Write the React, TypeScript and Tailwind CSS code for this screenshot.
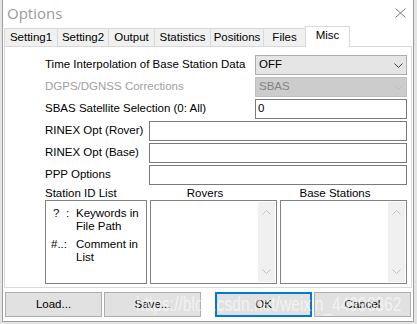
const tabs = [
  { name: 'Setting1', w: 'w-[53px]' },
  { name: 'Setting2', w: 'w-[51px]' },
  { name: 'Output', w: 'w-[46px]' },
  { name: 'Statistics', w: 'w-[56px]' },
  { name: 'Positions', w: 'w-[53px]' },
  { name: 'Files', w: 'w-[42px]' },
]

function Chevron({ up, className }: { up?: boolean; className?: string }) {
  return (
    <svg width="9" height="5" viewBox="0 0 9 5" className={className}>
      <polyline
        points={up ? '0.5,4.5 4.5,0.5 8.5,4.5' : '0.5,0.5 4.5,4.5 8.5,0.5'}
        fill="none"
        stroke="currentColor"
        strokeWidth="1"
      />
    </svg>
  )
}

function ListBox({ title }: { title: string }) {
  return (
    <div className="w-[127px] flex flex-col">
      <div className="h-[15px] flex items-end justify-center pr-[17px] leading-[14px]">{title}</div>
      <div className="h-[84px] border border-[#828282] bg-white flex justify-end p-[1px]">
        <div className="w-[17px] h-full bg-[#f0f0f0] flex flex-col items-center justify-between py-[8px] text-[#c2c2c2]">
          <Chevron up />
          <Chevron />
        </div>
      </div>
    </div>
  )
}

function Button({ label, primary, className }: { label: string; primary?: boolean; className?: string }) {
  return (
    <div
      className={`w-[97px] h-[25px] flex items-center justify-center bg-[#e1e1e1] ${
        primary ? 'border-2 border-[#0078d7]' : 'border border-[#adadad]'
      } ${className ?? ''}`}
    >
      {label}
    </div>
  )
}

export default function App() {
  return (
    <div className="w-[417px] h-[324px] bg-[#e4e4e4] overflow-hidden relative text-[11.5px] text-black font-['Liberation_Sans',sans-serif]">
      <div className="ml-[2px] w-[412px] h-[322px] bg-white border border-t-0 border-[#9d9d9d] flex flex-col">
        {/* title bar */}
        <div className="h-[26px] flex items-center justify-between pl-[4px] pr-[7px]">
          <span className="text-[15px] text-[#9a9a9a] leading-none font-['Open_Sans',sans-serif]">Options</span>
          <svg width="11" height="10" viewBox="0 0 11 10" className="text-[#7a7a7a]">
            <path d="M0.5 0.5 L10.5 9.5 M10.5 0.5 L0.5 9.5" stroke="currentColor" strokeWidth="1" />
          </svg>
        </div>

        {/* tabs */}
        <div className="h-[20px] ml-[1px] flex items-end">
          {tabs.map((t) => (
            <div
              key={t.name}
              className={`${t.w} h-[18px] bg-[#f0f0f0] border-l border-t border-[#d9d9d9] flex items-center justify-center leading-none`}
            >
              {t.name}
            </div>
          ))}
          <div className="w-[45px] h-[21px] -mb-[1px] relative z-10 bg-white border-l border-r border-t border-[#d9d9d9] flex items-center justify-center leading-none pb-[2px]">
            Misc
          </div>
        </div>

        {/* tab page */}
        <div className="ml-[1px] w-[408px] h-[242px] border border-[#d9d9d9] bg-white pl-[40px] pr-[4px] pt-[8px] flex flex-col gap-[2px]">
          <div className="h-[20px] flex items-center">
            <span className="flex-1 whitespace-nowrap">Time Interpolation of Base Station Data</span>
            <div className="w-[152px] h-[20px] bg-[#e5e5e5] border border-[#adadad] flex items-center justify-between pl-[3px] pr-[3px]">
              <span>OFF</span>
              <Chevron className="text-[#404040]" />
            </div>
          </div>
          <div className="h-[20px] flex items-center">
            <span className="flex-1 text-[#a0a0a0]">DGPS/DGNSS Corrections</span>
            <div className="w-[152px] h-[20px] bg-[#cccccc] border border-[#bfbfbf] flex items-center justify-between pl-[3px] pr-[3px]">
              <span className="text-[#838383]">SBAS</span>
              <Chevron className="text-[#bdbdbd]" />
            </div>
          </div>
          <div className="h-[20px] flex items-center">
            <span className="flex-1">SBAS Satellite Selection (0: All)</span>
            <div className="w-[152px] h-[20px] border border-[#7a7a7a] bg-white flex items-center pl-[2px]">0</div>
          </div>
          {['RINEX Opt (Rover)', 'RINEX Opt (Base)', 'PPP Options'].map((l) => (
            <div key={l} className="h-[20px] flex items-center">
              <span className="flex-1">{l}</span>
              <div className="w-[258px] h-[20px] border border-[#7a7a7a] bg-white" />
            </div>
          ))}

          <div className="flex gap-[3px] -mt-[2px]">
            <div className="w-[102px] flex flex-col">
              <div className="h-[15px] flex items-end leading-[14px]">Station ID List</div>
              <div className="h-[84px] border border-[#828282] bg-white pl-[5px] pt-[6px] leading-[13px]">
                <div className="flex">
                  <span className="w-[15px] shrink-0 pl-[2px]">?</span>
                  <span className="w-[10px] shrink-0">:</span>
                  <span>
                    Keywords in
                    <br />
                    File Path
                  </span>
                </div>
                <div className="flex mt-[5px]">
                  <span className="w-[25px] shrink-0">#..:</span>
                  <span>
                    Comment in
                    <br />
                    List
                  </span>
                </div>
              </div>
            </div>
            <ListBox title="Rovers" />
            <ListBox title="Base Stations" />
          </div>
        </div>

        {/* buttons */}
        <div className="mt-[4px] pl-[2px] flex">
          <Button label="Load..." />
          <Button label="Save..." className="ml-[2px]" />
          <Button label="OK" primary className="ml-[14px]" />
          <Button label="Cancel" className="ml-[2px]" />
        </div>
      </div>

      {/* watermark */}
      <div className="absolute left-[136px] top-[291px] text-[20px] scale-x-[0.78] origin-left whitespace-nowrap text-white/60 font-['Liberation_Sans',sans-serif] leading-[26px] pointer-events-none">
        https://blog.csdn.net/weixin_44996362
      </div>
    </div>
  )
}
